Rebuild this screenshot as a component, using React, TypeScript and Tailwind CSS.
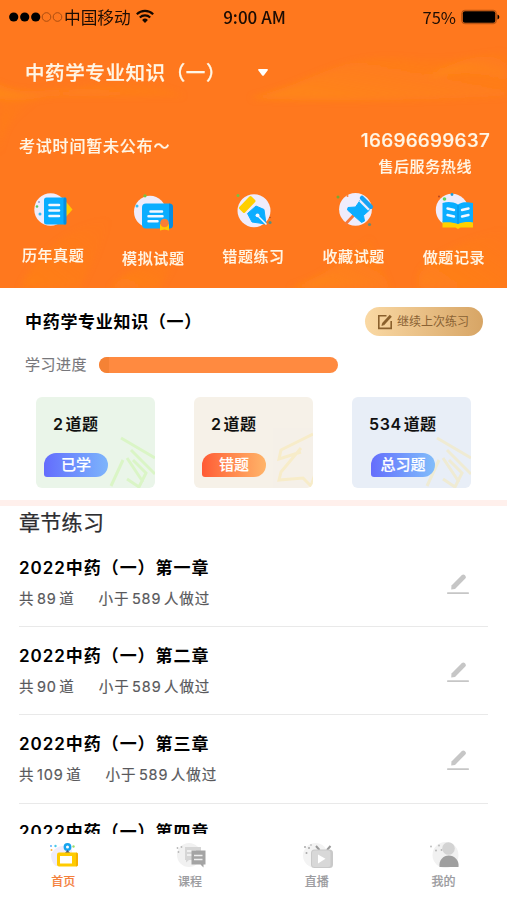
import React from 'react';

const chapters = [
    { title: '2022中药（一）第一章', total: 89, done: 589 },
    { title: '2022中药（一）第二章', total: 90, done: 589 },
    { title: '2022中药（一）第三章', total: 109, done: 589 },
    { title: '2022中药（一）第四章' },
];

const PapersIcon = () => (
    <svg viewBox="0 0 42 42" className="w-[42px] h-[42px]">
        <circle cx="18.600" cy="19.500" r="16.300" fill="#efecfb" />
        <path d="M33 10.500 40.500 19.500 33 28z" fill="#ffc800" />
        <path d="M14.500 7.500h19v27H14.500A2.500 2.500 0 0 1 12 32V10a2.500 2.500 0 0 1 2.500-2.500z" fill="#0aadff" />
        <rect x="31.500" y="7.500" width="3" height="27" rx="1.500" fill="#078de0" />
        <path d="M17.500 15h9.500M17.500 20.500h9.500M17.500 26h9.500" stroke="#f3f8ff" strokeWidth="2.600" strokeLinecap="round" />
        <circle cx="5" cy="16.500" r="1.300" fill="#56c96b" />
        <circle cx="8" cy="24" r="1.500" fill="#36bdf5" />
        <circle cx="7" cy="12" r=".8" fill="#5b6bc0" />
    </svg>
);

const CertificateIcon = () => (
    <svg viewBox="0 0 42 42" className="w-[42px] h-[42px]">
        <circle cx="18" cy="18.700" r="16" fill="#efecfb" />
        <rect x="10" y="10.500" width="30" height="25" rx="4" fill="#0aadff" />
        <path d="M37 10.500h.5a3.500 3.500 0 0 1 3.500 3.500v18a3.500 3.500 0 0 1-3.500 3.500H37z" fill="#078de0" />
        <path d="M18.500 18.500h11.500M16.500 23.300h14M16.500 28.200h9" stroke="#f3f8ff" strokeWidth="2.500" strokeLinecap="round" />
        <path d="M28 31h9v6.500l-4.500-1-4.500 1z" fill="#ffcb00" />
        <circle cx="32.500" cy="30" r="4.300" fill="#fb7e35" />
        <circle cx="13" cy="2.800" r="1.600" fill="#77c342" />
        <circle cx="5" cy="13" r="1.500" fill="#36bdf5" />
    </svg>
);

const PenIcon = () => (
    <svg viewBox="0 0 42 42" className="w-[42px] h-[42px]">
        <circle cx="22" cy="19.700" r="16.500" fill="#efecfb" />
        <rect x="6.500" y="9.500" width="17.500" height="8" rx="1.500" fill="#ffcf00" transform="rotate(-46 15.200 13.500)" />
        <path d="M15.500 22.500 24 15l8 3.500 2 14.500-14-2z" fill="#0aadff" strokeLinejoin="round" stroke="#0aadff" strokeWidth="1" />
        <path d="m34.500 33.500-9-9" stroke="#f3f8ff" strokeWidth="1.500" />
        <circle cx="25.500" cy="24.300" r="1.900" fill="#f3f8ff" />
        <circle cx="6" cy="4.500" r="1.500" fill="#77c342" />
        <circle cx="38" cy="31.500" r="1.600" fill="#5b8f7c" />
        <circle cx="38" cy="26.500" r=".8" fill="#b3501e" />
    </svg>
);

const PinIcon = () => (
    <svg viewBox="0 0 42 42" className="w-[42px] h-[42px]">
        <circle cx="22.500" cy="18.300" r="16.400" fill="#efecfb" />
        <path d="m12.500 33 8-8.500" stroke="#f5793a" strokeWidth="2.800" />
        <path d="m15 16.500 7.500-.5 4.500-6.500L36.500 19 30.500 24.500l1 5.500-3 1.500-14-12.500z" fill="#0aadff" stroke="#0aadff" strokeWidth="1" strokeLinejoin="round" />
        <path d="m28 8.500 9 9" stroke="#efecfb" strokeWidth="5.500" />
        <path d="m29 7 8.800 8.800" stroke="#17a2f3" strokeWidth="4.500" strokeLinecap="round" />
        <circle cx="5" cy="6" r="1.500" fill="#77a832" />
        <circle cx="14.500" cy="5" r="1" fill="#fb7e35" />
        <circle cx="36.500" cy="33.500" r="1.600" fill="#6f8a70" />
    </svg>
);

const BookIcon = () => (
    <svg viewBox="-1.500 2 42 42" className="w-[42px] h-[42px]">
        <circle cx="17.500" cy="20" r="16.200" fill="#efecfb" />
        <path d="M8 31h30.500v6.500H26l-2.500 1.500-2.500-1.500H8z" fill="#ffd000" />
        <path d="M8 13c5-1.500 10-1.500 15.500 1.500C28 11.500 33 12 38.500 13v19.500c-5-1-10-.5-15 1.500-5.500-2-10.500-2-15.500-1.500z" fill="#0aadff" />
        <path d="m13 18.500 6.500 1.500m-6.500 5 6.500 1.500M27.500 20l6.500-1.500M27.500 26.500l6.500-1.500" stroke="#f3f8ff" strokeWidth="2.400" strokeLinecap="round" />
        <path d="M23.500 15v19" stroke="#078de0" strokeWidth="1" />
        <circle cx="10" cy="9" r="1.800" fill="#5fd35f" />
        <circle cx="17.500" cy="4.500" r="1.400" fill="#1e9bd7" />
        <circle cx="4.500" cy="6.500" r=".9" fill="#b3401e" />
    </svg>
);

const features = [
    { label: '历年真题', icon: <PapersIcon />, offset: 'pt-0' },
    { label: '模拟试题', icon: <CertificateIcon />, offset: 'pt-[3px]' },
    { label: '错题练习', icon: <PenIcon />, offset: 'pt-px' },
    { label: '收藏试题', icon: <PinIcon />, offset: 'pt-px' },
    { label: '做题记录', icon: <BookIcon />, offset: 'pt-[2px]' },
];

const HomeIcon = () => (
    <svg viewBox="0 0 32 28" className="w-8 h-7">
        <path d="M4 12c3-5 7-8 12-8h9v20H9C6 22 4 18 4 12z" fill="#efecfb" />
        <circle cx="20.500" cy="5" r="2.700" fill="#fff" stroke="#16a4ee" strokeWidth="2.400" />
        <path d="M17.500 11.500 20.500 8l3 3.500z" fill="#4c5a7a" />
        <rect x="10" y="10.500" width="21" height="14" rx="2" fill="#ffcb00" />
        <path d="M29 10.500a2 2 0 0 1 2 2v10a2 2 0 0 1-2 2z" fill="#f5b000" />
        <rect x="13" y="14" width="12" height="7.500" fill="#fff" />
        <circle cx="4" cy="4" r=".9" fill="#4aa8ff" />
        <circle cx="8.500" cy="4" r="1.200" fill="#4ac8e8" />
        <circle cx="4.500" cy="8" r="1" fill="#ffb13b" />
        <circle cx="26.500" cy="4.500" r="1.200" fill="#9bdc6b" />
    </svg>
);

const CourseIcon = () => (
    <svg viewBox="0 0 32 28" className="w-8 h-7">
        <circle cx="15" cy="13" r="12" fill="#f1f1f1" />
        <path d="M11 5h16v13H15l-3 2.500V18h-1z" fill="#d6d6d6" />
        <path d="M13 9h9M13 13h6" stroke="#f7f7f7" strokeWidth="1.700" />
        <path d="M17.500 8.500h14v14h-2v3l-3-3h-9z" fill="#a4a4a4" />
        <path d="M20 13.500h8.500M20 17.500h8.500" stroke="#efefef" strokeWidth="1.500" />
        <g fill="#b8b8b8">
            <circle cx="3.500" cy="6" r=".9" />
            <circle cx="7.500" cy="5" r=".9" />
            <circle cx="4.500" cy="10" r=".9" />
        </g>
    </svg>
);

const LiveIcon = () => (
    <svg viewBox="0 0 32 28" className="w-8 h-7">
        <circle cx="14.500" cy="13.500" r="12.500" fill="#f3f3f3" />
        <path d="m15 4 3.500 4M29.500 4 26 8" stroke="#999" strokeWidth="2" />
        <rect x="10" y="7.500" width="22" height="18.500" rx="3.500" fill="#c9c9c9" />
        <rect x="11" y="8.500" width="18.500" height="16.500" rx="2.500" fill="#d8d8d8" />
        <path d="m17 12.500 7.500 4.200-7.500 4.800z" fill="#fff" />
        <g fill="#aaa">
            <circle cx="4" cy="5" r="1" />
            <circle cx="8" cy="6" r="1" />
            <circle cx="5.500" cy="11" r="1" />
            <circle cx="10" cy="3" r=".8" />
        </g>
    </svg>
);

const MineIcon = () => (
    <svg viewBox="0 0 32 28" className="w-8 h-7">
        <circle cx="17.500" cy="13" r="13" fill="#f1f1f1" />
        <circle cx="20.500" cy="6.500" r="6.300" fill="#d3d3d3" />
        <path d="M11.500 25c-1-7 4-11.500 9.300-11.500S31.500 18 30.500 25z" fill="#9f9f9f" />
        <g fill="#b8b8b8">
            <circle cx="3" cy="4.500" r=".9" />
            <circle cx="8" cy="8.500" r="1" />
            <circle cx="11" cy="3.500" r=".9" />
            <circle cx="13.500" cy="8" r=".9" />
        </g>
    </svg>
);

const tabs = [
    { label: '首页', icon: <HomeIcon />, color: 'text-[#f4803c]' },
    { label: '课程', icon: <CourseIcon />, color: 'text-[#9c9ca0]' },
    { label: '直播', icon: <LiveIcon />, color: 'text-[#9c9ca0]' },
    { label: '我的', icon: <MineIcon />, color: 'text-[#9c9ca0]' },
];

const stats = [
    {
        count: '2',
        label: '已学',
        card: 'bg-[#eaf5e9]',
        badge: 'ml-2 from-[#646cfd] to-[#7db4fb]',
        stroke: '#cff5b0',
        art: 'M12 6 46 26M22 18l24 24M14 28 2 54M18 26 34 50M24 28l13 13-7 14-12-8',
    },
    {
        count: '2',
        label: '错题',
        card: 'bg-[#f6f1e8]',
        badge: 'ml-2 from-[#ff5a35] to-[#ffb469]',
        stroke: '#f9e9b5',
        art: 'M46 2 14 18l-2 9 22-7M34 16 14 40l-2 8 24-2 8 8 4-12',
    },
    {
        count: '534',
        label: '总习题',
        card: 'bg-[#e8eef7]',
        badge: 'ml-[19px] from-[#656dfc] to-[#82bdfa]',
        stroke: '#f4e9bb',
        art: 'M12 6 46 26M22 18l24 24M14 28 2 54M18 26 34 50M24 28l13 13-7 14-12-8',
    },
];

const StatusBar = () => (
    <div className="grid grid-cols-3 items-center h-[34px] pl-2 pr-[7px] font-['Noto_Sans_CJK_SC',sans-serif] text-[#1c0d04]">
        <div className="flex items-center">
            <svg viewBox="0 0 56 12" className="w-[56px] h-3 shrink-0">
                <g fill="#000">
                    <circle cx="5.700" cy="6" r="4.600" />
                    <circle cx="16.700" cy="6" r="4.600" />
                    <circle cx="27.700" cy="6" r="4.600" />
                </g>
                <g fill="none" stroke="#a34a10" strokeWidth=".9">
                    <circle cx="38.500" cy="6" r="4.300" />
                    <circle cx="49.500" cy="6" r="4.300" />
                </g>
            </svg>
            <span className="text-[16.7px] leading-6 whitespace-nowrap">中国移动</span>
            <svg viewBox="0 0 18 14" className="w-[18px] h-[14px] mt-[-2px] ml-[5px] shrink-0" fill="none" stroke="#140800" strokeWidth="2.200">
                <path d="M.8 5.200a12 12 0 0 1 16.400 0" />
                <path d="M3.800 8.500a7.600 7.600 0 0 1 10.400 0" />
                <path d="m9 14-2.900-3.100a4.200 4.200 0 0 1 5.800 0z" fill="#140800" stroke="none" />
            </svg>
        </div>
        <span className="pl-px text-center text-[17px] leading-6 font-medium">9:00 AM</span>
        <div className="flex items-center justify-end">
            <span className="text-[16.5px] leading-6">75%</span>
            <svg viewBox="0 0 39 16" className="w-[39px] h-4 ml-[5px]">
                <rect x=".8" y="1.300" width="34.500" height="13.400" rx="3" fill="none" stroke="#a34a10" strokeWidth=".9" />
                <rect x="1.800" y="2.300" width="32.500" height="11.400" rx="2" fill="#000" />
                <path d="M36.500 5.500c2.400.8 2.400 4.200 0 5z" fill="#000" />
            </svg>
        </div>
    </div>
);

const HeaderWaves = () => (
    <svg viewBox="0 0 507 288" className="absolute inset-0 w-full h-full">
        <defs>
            <linearGradient id="wave" x1="0" y1="1" x2="1" y2="0">
                <stop offset="0" stopColor="#ff9212" stopOpacity=".75" />
                <stop offset="1" stopColor="#ff8a1a" stopOpacity="0" />
            </linearGradient>
            <filter id="soft">
                <feGaussianBlur stdDeviation="3" />
            </filter>
        </defs>
        <g fill="url(#wave)" filter="url(#soft)">
            <path d="M-10 80c30 16 50 12 80 6-20 14-50 16-80 12z" />
            <path d="M45 96c30-8 60-14 80-14 20 0 40 6 60 14z" opacity=".6" />
            <path d="M250 98c60-14 90-44 150-40 40 4 70 0 107-8v46c-80 4-170 6-257 2z" opacity=".8" />
            <path d="M507 52c-30 2-60 12-80 26 30-8 60-6 80 2z" />
            <path d="M20 288c20-40 50-60 90-70-10 30-20 50-30 70z" opacity=".4" />
            <path d="M110 288c20-20 40-30 70-34l-20 34z" opacity=".5" />
            <path d="M290 288c30-10 50-24 80-50l20 50z" opacity=".8" />
            <path d="M420 288c-10-20 20-40 87-60v60z" opacity=".5" />
            <path d="M0 160c0-30 10-44 40-60H0z" opacity=".35" />
        </g>
    </svg>
);

const Header = () => (
    <header className="relative h-72 bg-[#ff781e] text-[#fff6e6]">
        <HeaderWaves />
        <div className="relative">
            <StatusBar />
            <div className="flex items-center mt-[23px] pl-[25px] h-[30px]">
                <h1 className="w-[233px] pt-[3px] text-[19.5px] tracking-[0.6px] font-medium whitespace-nowrap [-webkit-text-stroke:0.25px]">中药学专业知识（一）</h1>
                <svg viewBox="0 0 10 7" className="w-[10px] h-[7px]">
                    <path d="M1 0h8c1 0 1.200.8.600 1.400L6 6.200c-.6.700-1.400.7-2 0L.4 1.400C-.2.800 0 0 1 0z" fill="#fff" />
                </svg>
            </div>
            <div className="flex justify-between mt-[41px] pl-[19px] pr-[17px] h-[50px] font-medium">
                <p className="pt-[6px] text-[16px] leading-6 tracking-[0.8px] [-webkit-text-stroke:0.15px]">考试时间暂未公布～</p>
                <div className="flex flex-col items-end">
                    <p className="pt-px text-[19px] leading-6 tracking-[0.25px] [-webkit-text-stroke:0.2px]">16696699637</p>
                    <p className="mt-[2px] mr-[18px] text-[15px] leading-6 tracking-[0.6px] [-webkit-text-stroke:0.15px]">售后服务热线</p>
                </div>
            </div>
            <div className="grid grid-cols-5 mt-3 ml-[3px] w-[501px]">
                {features.map((item) => (
                    <div key={item.label} className={`flex flex-col items-center ${item.offset}`}>
                        {item.icon}
                        <span className="mt-[12px] text-[15px] leading-6 tracking-[0.6px] font-medium [-webkit-text-stroke:0.15px]">{item.label}</span>
                    </div>
                ))}
            </div>
        </div>
    </header>
);

const EditNoteIcon = () => (
    <svg viewBox="0 0 16 16" className="w-4 h-4" fill="none" stroke="#8a602c" strokeWidth="1.600">
        <path d="M9.500 1.800H1.800v12.600h12.400V7" />
        <path d="m6 10.200 7.800-8.400" strokeWidth="2.800" />
        <path d="m4.500 12 .6-3 2.200 2z" fill="#8a602c" stroke="none" />
    </svg>
);

const Overview = () => (
    <section className="h-[212px] pt-[19px]">
        <div className="flex items-center justify-between h-[29px] pl-[25px] pr-[24px]">
            <h2 className="pt-[2px] text-[17px] tracking-[0.7px] font-semibold text-black whitespace-nowrap">中药学专业知识（一）</h2>
            <button className="flex items-center gap-[4px] w-[118px] h-[29px] pl-3 rounded-full bg-gradient-to-r from-[#fad9a4] to-[#d7a565] text-[12px] text-[#8a6234] whitespace-nowrap">
                <EditNoteIcon />
                <span className="pt-px">继续上次练习</span>
            </button>
        </div>
        <div className="flex items-center mt-[17px] pl-[25px] h-6">
            <span className="w-[74px] text-[15px] tracking-[0.5px] text-[#77777b] [-webkit-text-stroke:0.15px]">学习进度</span>
            <div className="w-[239px] h-4 rounded-full bg-[#ff8a40] overflow-hidden">
                <div className="w-[10px] h-full rounded-l-full bg-[#f58235]" />
            </div>
        </div>
        <div className="flex gap-[39px] mt-5 pl-9">
            {stats.map((item) => (
                <div key={item.label} className={`relative w-[119px] h-[91px] pt-[15px] rounded-md overflow-hidden ${item.card}`}>
                    <svg viewBox="0 0 46 56" className="absolute right-0 bottom-0 w-[46px] h-14" fill="none" stroke={item.stroke} strokeWidth="3" opacity=".6">
                        <path d={item.art} />
                    </svg>
                    <p className="relative flex items-center gap-[2px] pl-[17px] text-[16px] leading-6 font-semibold text-[#111]">
                        <span className="tracking-[0.6px]">{item.count}</span>
                        <span className="tracking-[0.3px]">道题</span>
                    </p>
                    <div className={`relative mt-[17px] w-16 h-6 rounded-[12px] rounded-bl-[3px] bg-gradient-to-r text-center text-[15px] leading-[23px] font-medium text-white [-webkit-text-stroke:0.15px] ${item.badge}`}>
                        {item.label}
                    </div>
                </div>
            ))}
        </div>
    </section>
);

const PencilIcon = () => (
    <svg viewBox="0 0 24 24" className="w-6 h-6" fill="#c6c6c6">
        <path d="M5.200 17.500 5.500 13.500 15.900 3.100a2 2 0 0 1 2.800 0l.6.600a2 2 0 0 1 0 2.800L9 16.900z" />
        <rect x="1" y="20.300" width="22" height="1.700" rx=".7" />
    </svg>
);

const ChapterList = () => (
    <section className="px-[19px]">
        <h2 className="text-[21px] leading-[33px] tracking-[0.3px] text-[#2d2d30] [-webkit-text-stroke:0.25px]">章节练习</h2>
        {chapters.map((chapter) => (
            <div key={chapter.title} className="flex justify-between h-[88.2px] pt-[16.5px] border-b-[1.5px] border-[#e9e9e9]">
                <div>
                    <h3 className="text-[17px] leading-6 tracking-[0.95px] font-semibold text-black whitespace-nowrap">{chapter.title}</h3>
                    {chapter.total && (
                        <p className="flex mt-[7.5px] text-[14.5px] leading-6 tracking-[0.9px] text-[#59595c] [-webkit-text-stroke:0.2px]">
                            <span>共<span className="mx-[2.5px]">{chapter.total}</span>道</span>
                            <span className="ml-6">小于<span className="mx-[2.5px]">{chapter.done}</span>人做过</span>
                        </p>
                    )}
                </div>
                <div className="pt-[16px] mr-[18px]">
                    <PencilIcon />
                </div>
            </div>
        ))}
    </section>
);

const TabBar = () => (
    <nav className="grid grid-cols-4 h-[66px] pt-[8px] bg-white">
        {tabs.map((tab) => (
            <div key={tab.label} className="flex flex-col items-center">
                {tab.icon}
                <span className={`mt-[3px] text-[12px] leading-[18px] font-medium [-webkit-text-stroke:0.15px] ${tab.color}`}>{tab.label}</span>
            </div>
        ))}
    </nav>
);

export default function App() {
    return (
        <div lang="zh-CN" className="flex flex-col w-[507px] h-[900px] overflow-hidden bg-white font-['Inter','Noto_Sans_CJK_SC',sans-serif]">
            <main className="h-[834px] overflow-hidden">
                <Header />
                <Overview />
                <div className="h-[6px] bg-[#fff0ec]" />
                <ChapterList />
            </main>
            <TabBar />
        </div>
    );
}
